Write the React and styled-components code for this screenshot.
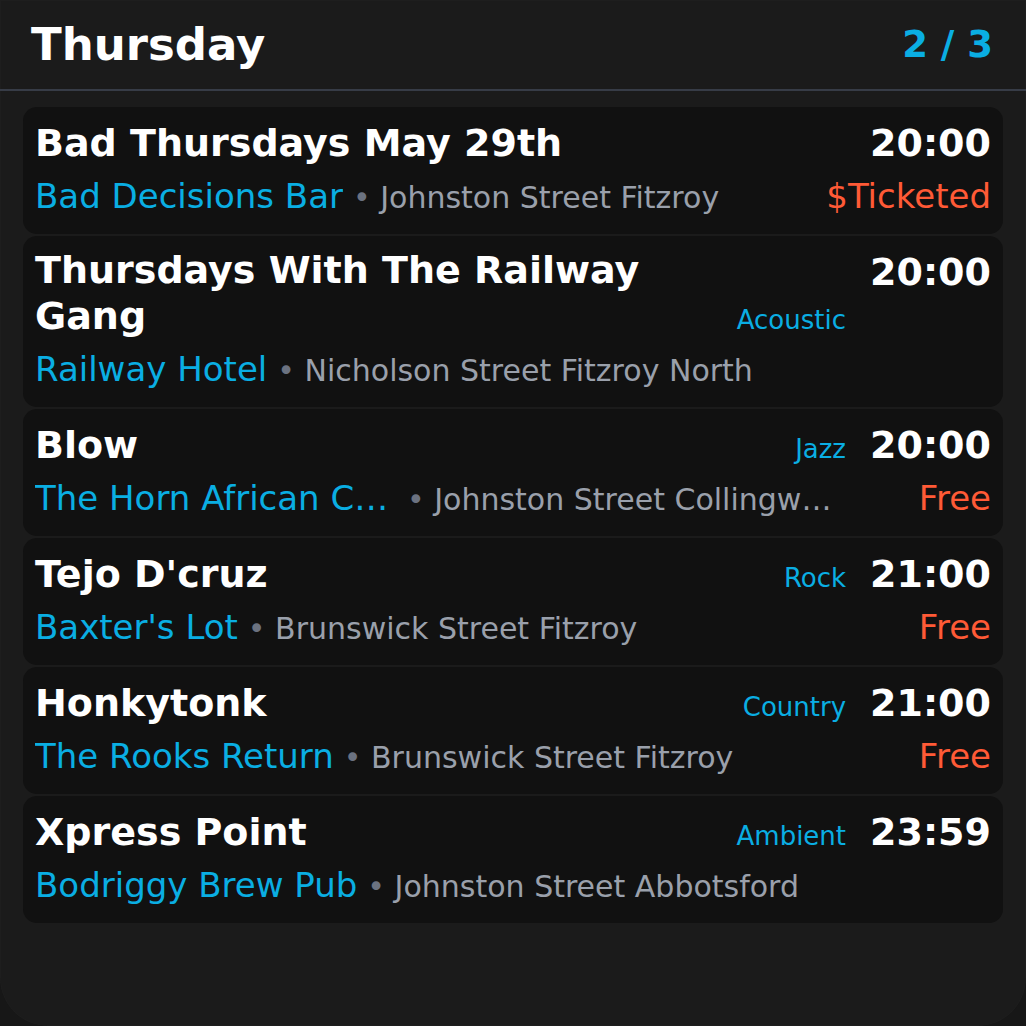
import React from "react";
import styled, { createGlobalStyle } from "styled-components";

const GlobalStyle = createGlobalStyle`
  html, body {
    margin: 0;
    padding: 0;
    background: #171717;
  }
  body {
    font-family: "DejaVu Sans", "Noto Sans", sans-serif;
  }
`;

const events = [
  {
    title: "Bad Thursdays May 29th",
    time: "20:00",
    venue: "Bad Decisions Bar",
    address: "Johnston Street Fitzroy",
    price: "$Ticketed",
  },
  {
    title: "Thursdays With The Railway Gang",
    genre: "Acoustic",
    time: "20:00",
    venue: "Railway Hotel",
    address: "Nicholson Street Fitzroy North",
  },
  {
    title: "Blow",
    genre: "Jazz",
    time: "20:00",
    venue: "The Horn African Cafe",
    address: "Johnston Street Collingwood",
    price: "Free",
  },
  {
    title: "Tejo D'cruz",
    genre: "Rock",
    time: "21:00",
    venue: "Baxter's Lot",
    address: "Brunswick Street Fitzroy",
    price: "Free",
  },
  {
    title: "Honkytonk",
    genre: "Country",
    time: "21:00",
    venue: "The Rooks Return",
    address: "Brunswick Street Fitzroy",
    price: "Free",
  },
  {
    title: "Xpress Point",
    genre: "Ambient",
    time: "23:59",
    venue: "Bodriggy Brew Pub",
    address: "Johnston Street Abbotsford",
  },
];

export default function App() {
  return (
    <>
      <GlobalStyle />
      <Panel>
        <Header>
          <Day>Thursday</Day>
          <Pager>2 / 3</Pager>
        </Header>
        <List>
          {events.map((ev, idx) => (
            <Card key={idx}>
              <TopRow>
                <Title>{ev.title}</Title>
                {ev.genre && <Genre>{ev.genre}</Genre>}
                <Time>{ev.time}</Time>
              </TopRow>
              <BottomRow>
                <Place>
                  <Venue>{ev.venue}</Venue>
                  <Address>
                    <Dot>•</Dot> {ev.address}
                  </Address>
                </Place>
                <Price>{ev.price || ""}</Price>
              </BottomRow>
            </Card>
          ))}
        </List>
      </Panel>
    </>
  );
}

const Panel = styled.div`
  width: 1026px;
  height: 1026px;
  box-sizing: border-box;
  background: #1b1b1b;
  border-radius: 0 0 48px 48px;
  box-shadow: inset 0 0 0 1px rgba(255, 255, 255, 0.015);
  overflow: hidden;
`;

const Header = styled.div`
  height: 89px;
  display: flex;
  align-items: center;
  justify-content: space-between;
  padding: 0 33px 0 31px;
  border-bottom: 2px solid #373c47;
`;

const Day = styled.h1`
  margin: 0;
  font-size: 45px;
  font-weight: 700;
  color: #ffffff;
  line-height: 1;
`;

const Pager = styled.div`
  font-size: 37px;
  font-weight: 700;
  color: #0aaee3;
  line-height: 1;
`;

const List = styled.div`
  display: flex;
  flex-direction: column;
  gap: 2px;
  padding: 16px 23px 0;
`;

const Card = styled.div`
  background: #111111;
  border-radius: 14px;
  padding: 11px 12px 18px;
  display: flex;
  flex-direction: column;
  gap: 10px;
`;

const TopRow = styled.div`
  display: flex;
  align-items: flex-start;
`;

const Title = styled.div`
  flex: 1;
  min-width: 0;
  font-size: 38px;
  font-weight: 700;
  line-height: 46px;
  color: #ffffff;
  align-self: last baseline;
`;

const Genre = styled.div`
  font-size: 26px;
  line-height: 32px;
  color: #0aaee3;
  margin-left: 16px;
  align-self: last baseline;
  white-space: nowrap;
`;

const Time = styled.div`
  min-width: 120px;
  margin-left: 24px;
  text-align: right;
  font-size: 38px;
  font-weight: 700;
  line-height: 46px;
  margin-top: 2px;
  color: #ffffff;
`;

const BottomRow = styled.div`
  display: flex;
  align-items: baseline;
  height: 40px;
  line-height: 40px;
`;

const Place = styled.div`
  flex: 1;
  min-width: 0;
  display: flex;
  align-items: baseline;
  gap: 10px;
`;

const Venue = styled.span`
  font-size: 34px;
  color: #0aaee3;
  max-width: 362px;
  white-space: nowrap;
  overflow: hidden;
  text-overflow: ellipsis;
  flex-shrink: 0;
`;

const Address = styled.span`
  flex: 1;
  min-width: 0;
  font-size: 30px;
  color: #9aa0ab;
  white-space: nowrap;
  overflow: hidden;
  text-overflow: ellipsis;
`;

const Dot = styled.span`
  color: #6b7280;
`;

const Price = styled.span`
  min-width: 120px;
  margin-left: 24px;
  text-align: right;
  font-size: 34px;
  color: #ff5a36;
  white-space: nowrap;
`;
